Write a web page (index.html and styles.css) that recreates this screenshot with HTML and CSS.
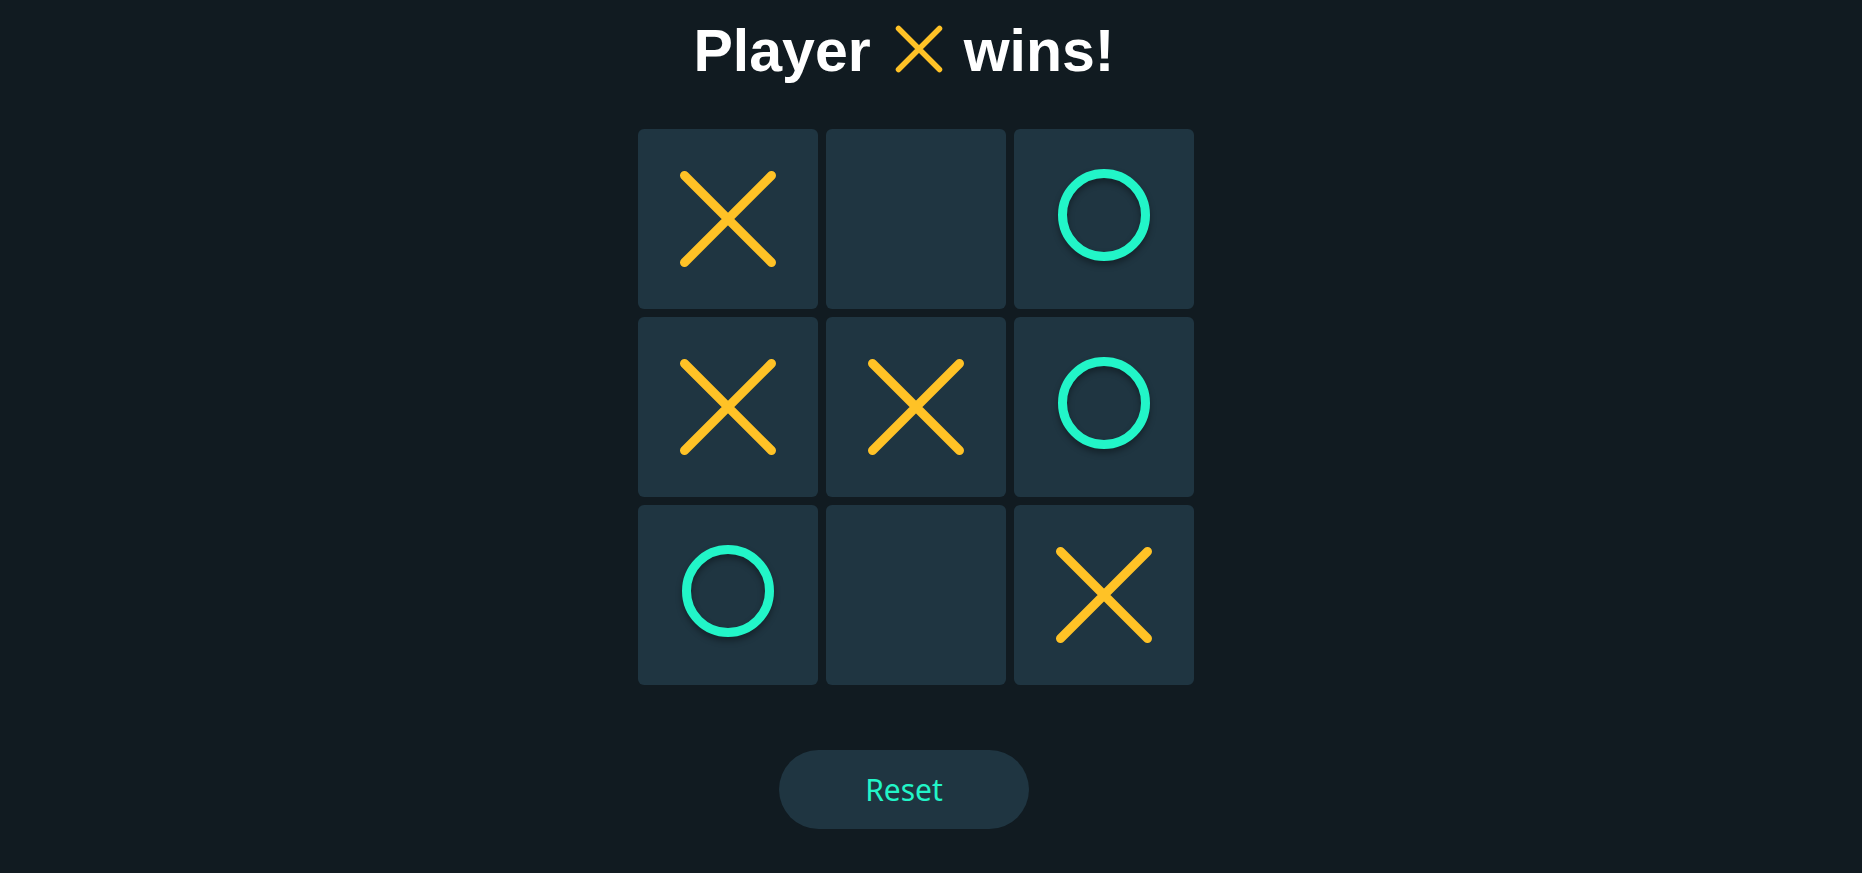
FILE: index.html
```html
<!DOCTYPE html>
<html lang="en">
<head>
<meta charset="utf-8">
<title>Tic Tac Toe</title>
<link rel="stylesheet" href="styles.css">
</head>
<body>
<main class="game">
  <h1 class="status">Player<svg class="status-mark" viewBox="0 0 48 48" width="48" height="48"><path d="M3.5 3.5 L44.5 44.5 M44.5 3.5 L3.5 44.5" stroke="#ffc226" stroke-width="5.5" stroke-linecap="round" fill="none"/></svg>wins!</h1>
  <div class="board">
    <div class="cell"><svg class="mark mark-x" viewBox="0 0 180 180"><path d="M46.5 46.5 L133.5 133.5 M133.5 46.5 L46.5 133.5"/></svg></div>
    <div class="cell"></div>
    <div class="cell"><svg class="mark mark-o" viewBox="0 0 180 180"><circle cx="90" cy="86" r="41.5"/></svg></div>
    <div class="cell"><svg class="mark mark-x" viewBox="0 0 180 180"><path d="M46.5 46.5 L133.5 133.5 M133.5 46.5 L46.5 133.5"/></svg></div>
    <div class="cell"><svg class="mark mark-x" viewBox="0 0 180 180"><path d="M46.5 46.5 L133.5 133.5 M133.5 46.5 L46.5 133.5"/></svg></div>
    <div class="cell"><svg class="mark mark-o" viewBox="0 0 180 180"><circle cx="90" cy="86" r="41.5"/></svg></div>
    <div class="cell"><svg class="mark mark-o" viewBox="0 0 180 180"><circle cx="90" cy="86" r="41.5"/></svg></div>
    <div class="cell"></div>
    <div class="cell"><svg class="mark mark-x" viewBox="0 0 180 180"><path d="M46.5 46.5 L133.5 133.5 M133.5 46.5 L46.5 133.5"/></svg></div>
  </div>
  <button class="reset" type="button">Reset</button>
</main>
</body>
</html>
```
FILE: styles.css
```css
html, body {
  margin: 0;
  padding: 0;
  background: #111b21;
  height: 100%;
}

.game {
  display: flex;
  flex-direction: column;
  align-items: center;
  padding-right: 54px;
}

.status {
  margin: 0;
  padding-top: 18px;
  font-family: "Liberation Sans", Arial, sans-serif;
  font-weight: 700;
  font-size: 59px;
  line-height: 67px;
  color: #ffffff;
  white-space: nowrap;
}

.status-mark {
  display: inline-block;
  vertical-align: -2px;
  margin: 0 21px 0 24px;
}

.board {
  margin-top: 44px;
  margin-left: 23px;
  display: grid;
  grid-template-columns: repeat(3, 180px);
  grid-template-rows: repeat(3, 180px);
  gap: 8px;
}

.cell {
  background: #1f3541;
  border-radius: 6px;
}

.mark {
  display: block;
  width: 180px;
  height: 180px;
  fill: none;
  stroke-linecap: round;
  stroke-width: 9;
}

.mark-x {
  stroke: #ffc226;
}

.mark-o {
  stroke: #22f5c8;
  filter: drop-shadow(0 4px 3px rgba(0, 0, 0, 0.35));
}

.reset {
  margin-top: 65px;
  width: 250px;
  height: 79px;
  border: none;
  border-radius: 40px;
  background: #1f3541;
  color: #22f5c8;
  font-family: "Noto Sans", sans-serif;
  font-size: 30px;
  padding: 0;
  cursor: pointer;
}
```
